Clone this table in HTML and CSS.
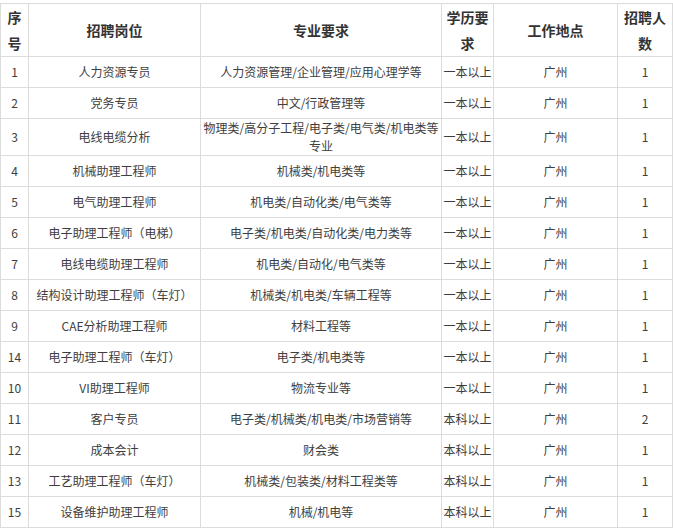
FILE: index.html
```html
<!DOCTYPE html>
<html lang="zh">
<head>
<meta charset="utf-8">
<link rel="stylesheet" href="styles.css">
</head>
<body>
<table class="jobs">
  <colgroup>
    <col class="c-no"><col class="c-pos"><col class="c-major"><col class="c-edu"><col class="c-loc"><col class="c-num">
  </colgroup>
  <thead>
    <tr><th>序号</th><th>招聘岗位</th><th>专业要求</th><th>学历要求</th><th>工作地点</th><th>招聘人数</th></tr>
  </thead>
  <tbody>
    <tr><td>1</td><td>人力资源专员</td><td>人力资源管理/企业管理/应用心理学等</td><td>一本以上</td><td>广州</td><td>1</td></tr>
    <tr><td>2</td><td>党务专员</td><td>中文/行政管理等</td><td>一本以上</td><td>广州</td><td>1</td></tr>
    <tr><td>3</td><td>电线电缆分析</td><td>物理类/高分子工程/电子类/电气类/机电类等专业</td><td>一本以上</td><td>广州</td><td>1</td></tr>
    <tr><td>4</td><td>机械助理工程师</td><td>机械类/机电类等</td><td>一本以上</td><td>广州</td><td>1</td></tr>
    <tr><td>5</td><td>电气助理工程师</td><td>机电类/自动化类/电气类等</td><td>一本以上</td><td>广州</td><td>1</td></tr>
    <tr><td>6</td><td>电子助理工程师（电梯）</td><td>电子类/机电类/自动化类/电力类等</td><td>一本以上</td><td>广州</td><td>1</td></tr>
    <tr><td>7</td><td>电线电缆助理工程师</td><td>机电类/自动化/电气类等</td><td>一本以上</td><td>广州</td><td>1</td></tr>
    <tr><td>8</td><td>结构设计助理工程师（车灯）</td><td>机械类/机电类/车辆工程等</td><td>一本以上</td><td>广州</td><td>1</td></tr>
    <tr><td>9</td><td>CAE分析助理工程师</td><td>材料工程等</td><td>一本以上</td><td>广州</td><td>1</td></tr>
    <tr><td>14</td><td>电子助理工程师（车灯）</td><td>电子类/机电类等</td><td>一本以上</td><td>广州</td><td>1</td></tr>
    <tr><td>10</td><td>VI助理工程师</td><td>物流专业等</td><td>一本以上</td><td>广州</td><td>1</td></tr>
    <tr><td>11</td><td>客户专员</td><td>电子类/机械类/机电类/市场营销等</td><td>本科以上</td><td>广州</td><td>2</td></tr>
    <tr><td>12</td><td>成本会计</td><td>财会类</td><td>本科以上</td><td>广州</td><td>1</td></tr>
    <tr><td>13</td><td>工艺助理工程师（车灯）</td><td>机械类/包装类/材料工程类等</td><td>本科以上</td><td>广州</td><td>1</td></tr>
    <tr><td>15</td><td>设备维护助理工程师</td><td>机械/机电等</td><td>本科以上</td><td>广州</td><td>1</td></tr>
  </tbody>
</table>
</body>
</html>
```

FILE: styles.css
```css
html, body {
  margin: 0;
  padding: 0;
  background: #ffffff;
}
body {
  padding-top: 3px;
  font-family: "Noto Sans CJK SC", "Noto Sans", sans-serif;
}
.jobs {
  border-collapse: collapse;
  table-layout: fixed;
  width: 672px;
}
.c-no { width: 28px; }
.c-pos { width: 172px; }
.c-major { width: 241px; }
.c-edu { width: 52px; }
.c-loc { width: 124px; }
.c-num { width: 55px; }
.jobs th, .jobs td {
  border: 1px solid #dcdcdc;
  padding: 0;
  text-align: center;
  vertical-align: middle;
}
.jobs th {
  font-size: 14px;
  font-weight: bold;
  color: #333333;
  line-height: 26px;
}
.jobs td {
  font-size: 12px;
  color: #3e3e3e;
  line-height: 18px;
  height: 30px;
}
```
